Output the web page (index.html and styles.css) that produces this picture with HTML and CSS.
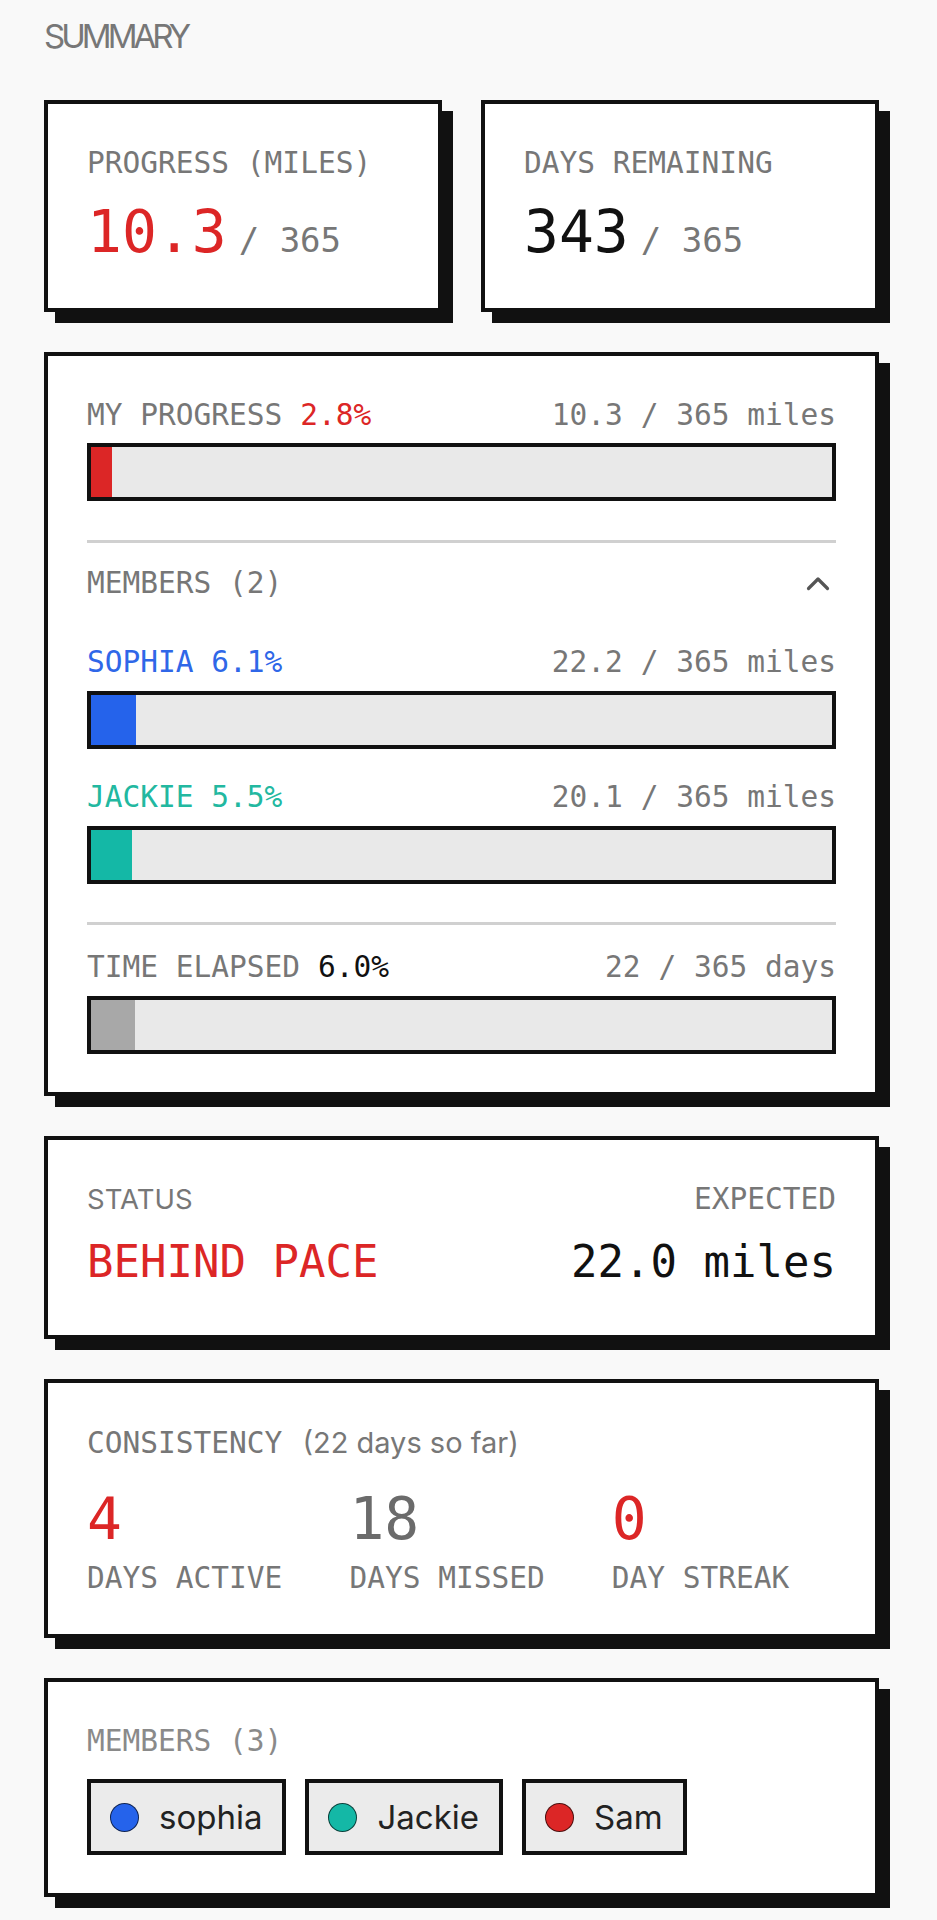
FILE: index.html
```html
<!DOCTYPE html>
<html lang="en">
<head>
<meta charset="utf-8">
<title>Summary</title>
<link rel="stylesheet" href="styles.css">
</head>
<body>
<div class="page">
  <h1 class="heading">SUMMARY</h1>
  <div class="stack">
    <div class="top-grid">
      <div class="card">
        <div class="label-row"><span class="label">PROGRESS (MILES)</span></div>
        <div class="big-row"><span class="big red">10.3</span><span class="of">/ 365</span></div>
      </div>
      <div class="card">
        <div class="label-row"><span class="label">DAYS REMAINING</span></div>
        <div class="big-row"><span class="big dark">343</span><span class="of">/ 365</span></div>
      </div>
    </div>

    <div class="card">
      <div class="label-row split">
        <span class="label">MY PROGRESS <span class="red">2.8%</span></span>
        <span class="label">10.3 / 365 miles</span>
      </div>
      <div class="bar"><div class="fill fill-red" style="width:2.8%"></div></div>
      <div class="divider"></div>
      <div class="label-row split members-head">
        <span class="label">MEMBERS (2)</span>
        <svg class="chevron" width="24" height="17" viewBox="0 0 24 17"><polyline points="2.5,13.5 12,4 21.5,13.5" fill="none" stroke="#555" stroke-width="3.2" stroke-linecap="round" stroke-linejoin="round"/></svg>
      </div>
      <div class="label-row split member-row">
        <span class="label blue">SOPHIA 6.1%</span>
        <span class="label">22.2 / 365 miles</span>
      </div>
      <div class="bar"><div class="fill fill-blue" style="width:6.1%"></div></div>
      <div class="label-row split member-row second">
        <span class="label teal">JACKIE 5.5%</span>
        <span class="label">20.1 / 365 miles</span>
      </div>
      <div class="bar"><div class="fill fill-teal" style="width:5.5%"></div></div>
      <div class="divider lower"></div>
      <div class="label-row split">
        <span class="label">TIME ELAPSED <span class="dark">6.0%</span></span>
        <span class="label">22 / 365 days</span>
      </div>
      <div class="bar"><div class="fill fill-gray" style="width:6.0%"></div></div>
    </div>

    <div class="card status-card">
      <div class="status-col">
        <div class="label-row"><span class="sans-label">STATUS</span></div>
        <div class="value red">BEHIND PACE</div>
      </div>
      <div class="status-col right">
        <div class="label-row"><span class="label">EXPECTED</span></div>
        <div class="value dark">22.0 miles</div>
      </div>
    </div>

    <div class="card">
      <div class="label-row"><span class="label">CONSISTENCY</span> <span class="sans-label small">(22 days so far)</span></div>
      <div class="stats">
        <div class="stat">
          <div class="stat-num red">4</div>
          <div class="stat-label">DAYS ACTIVE</div>
        </div>
        <div class="stat">
          <div class="stat-num gray">18</div>
          <div class="stat-label">DAYS MISSED</div>
        </div>
        <div class="stat">
          <div class="stat-num red">0</div>
          <div class="stat-label">DAY STREAK</div>
        </div>
      </div>
    </div>

    <div class="card">
      <div class="label-row"><span class="label light">MEMBERS (3)</span></div>
      <div class="chips">
        <div class="chip"><span class="dot dot-blue"></span><span class="chip-name">sophia</span></div>
        <div class="chip"><span class="dot dot-teal"></span><span class="chip-name">Jackie</span></div>
        <div class="chip"><span class="dot dot-red"></span><span class="chip-name">Sam</span></div>
      </div>
    </div>
  </div>
</div>
</body>
</html>
```

FILE: styles.css
```css
* { box-sizing: border-box; }

html, body {
  margin: 0;
  padding: 0;
  background: #f9f9f9;
}

body {
  font-family: "DejaVu Sans Mono", "Liberation Mono", monospace;
  color: #111;
}

.page {
  width: 937px;
  padding: 20px 58px 40px 44px;
}

.heading {
  margin: 0 0 47px 0;
  font-family: "Inter", "Noto Sans", sans-serif;
  font-weight: 400;
  font-size: 33px;
  line-height: 33px;
  letter-spacing: -0.12em;
  color: #777;
}

.stack {
  display: flex;
  flex-direction: column;
  gap: 40px;
}

.top-grid {
  display: grid;
  grid-template-columns: 1fr 1fr;
  gap: 39px;
}

.card {
  background: #fff;
  border: 4px solid #111;
  box-shadow: 11px 11px 0 #111;
  padding: 38px 39px;
}

.label-row {
  display: flex;
  align-items: baseline;
  height: 43px;
  line-height: 43px;
}

.label-row.split {
  justify-content: space-between;
}

.label {
  font-family: "DejaVu Sans Mono", monospace;
  font-size: 29.5px;
  color: #777;
  white-space: pre;
}

.label.light { color: #8a8a8a; }

.sans-label {
  font-family: "Inter", "Noto Sans", sans-serif;
  font-size: 27.5px;
  color: #777;
}

.sans-label.small {
  font-size: 29px;
  margin-left: 20px;
}

.red { color: #dc2626; }
.dark { color: #111; }
.gray { color: #6b6b6b; }
.blue { color: #2f67e8; }
.teal { color: #22b8a0; }

.big-row {
  margin-top: 9px;
  height: 76px;
  line-height: 76px;
  white-space: nowrap;
}

.big {
  font-family: "DejaVu Sans Mono", monospace;
  font-size: 58px;
}

.of {
  font-size: 34px;
  color: #777;
  margin-left: 12px;
}

.bar {
  margin-top: 6px;
  height: 58px;
  border: 4px solid #111;
  background: #e9e9e9;
}

.fill { height: 100%; }
.fill-red { background: #dc2626; }
.fill-blue { background: #2563eb; }
.fill-teal { background: #14b8a6; }
.fill-gray { background: #a8a8a8; }

.divider {
  height: 3px;
  background: #d0d0d0;
  margin: 39px 0 19px;
}

.divider.lower { margin: 38px 0 21px; }

.members-head { align-items: center; }

.chevron {
  display: block;
  margin-right: 6px;
}

.member-row { margin-top: 36px; }
.member-row + .bar { margin-top: 7px; }
.member-row.second { margin-top: 27px; }
.divider.lower + .label-row + .bar { margin-top: 7px; }

.status-card {
  display: flex;
  justify-content: space-between;
}

.status-col.right { align-items: flex-end; display: flex; flex-direction: column; }

.value {
  margin-top: 6px;
  font-family: "DejaVu Sans Mono", monospace;
  font-size: 44px;
  line-height: 70px;
  height: 70px;
  white-space: nowrap;
}

.stats {
  display: flex;
  gap: 67px;
  margin-top: 23px;
}

.stat-num {
  font-size: 58px;
  line-height: 64px;
  height: 64px;
}

.stat-label {
  margin-top: 10px;
  font-size: 29.5px;
  line-height: 35px;
  color: #777;
  white-space: nowrap;
}

.chips {
  display: flex;
  gap: 19px;
  margin-top: 16px;
}

.chip {
  display: flex;
  align-items: center;
  height: 76px;
  padding: 0 20px 0 19px;
  border: 4px solid #111;
  background: #ebebeb;
  gap: 20px;
}

.dot {
  width: 29px;
  height: 29px;
  border-radius: 50%;
  border: 1.5px solid rgba(0, 0, 0, 0.65);
  flex: none;
}

.dot-blue { background: #2563eb; }
.dot-teal { background: #14b8a6; }
.dot-red { background: #dc2626; }

.chip-name {
  font-family: "Inter", "Noto Sans", sans-serif;
  font-size: 33px;
  color: #222;
}
```
